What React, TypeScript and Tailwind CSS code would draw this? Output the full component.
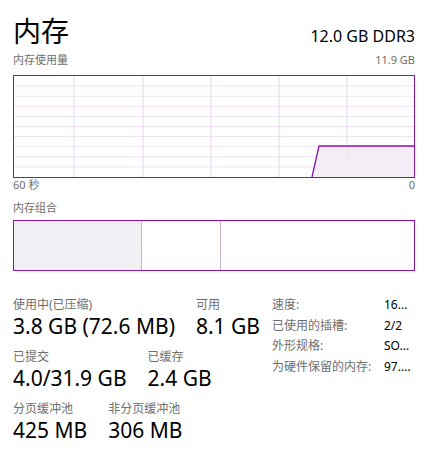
import React from 'react'

const font = { fontFamily: '"Segoe UI", "Noto Sans", "Noto Sans CJK SC", sans-serif' }

const purple = '#8b12ae'

function UsageGraph() {
  const w = 400
  const h = 101
  const vLines = [60, 129, 197, 265, 333]
  const hLines = Array.from({ length: 9 }, (_, i) => ((i + 1) * h) / 10)
  return (
    <div className="border border-[#8b12ae] h-[103px] w-full">
      <svg width="100%" height="100%" viewBox={`0 0 ${w} ${h}`} preserveAspectRatio="none">
        {hLines.map((y) => (
          <line key={y} x1={0} x2={w} y1={y} y2={y} stroke="#efe2f2" strokeWidth={1} />
        ))}
        {vLines.map((x) => (
          <line key={x} x1={x} x2={x} y1={0} y2={h} stroke="#e4d4e9" strokeWidth={1} />
        ))}
        <polygon points={`298,${h} 305,70 ${w},70 ${w},${h}`} fill="#f1eaf5" fillOpacity={0.85} />
        <polyline points={`298,${h} 305,70 ${w},70`} fill="none" stroke={purple} strokeWidth={1.3} />
      </svg>
    </div>
  )
}

function Composition() {
  return (
    <div className="flex h-[51px] w-full border border-[#8b12ae]">
      <div className="w-[128px] bg-[#f3f0f5] border-r border-[#c7b2cf]" />
      <div className="w-[79px] border-r border-[#c7b2cf]" />
      <div className="flex-1" />
    </div>
  )
}

function Stat({ label, value }: { label: string; value: string }) {
  return (
    <div className="flex flex-col">
      <span className="text-[12px] leading-[16px] text-[#6e6e6e]">{label}</span>
      <span className="text-[21px] leading-[26px] text-black">{value}</span>
    </div>
  )
}

const specs: [string, string][] = [
  ['速度:', '16...'],
  ['已使用的插槽:', '2/2'],
  ['外形规格:', 'SO...'],
  ['为硬件保留的内存:', '97....'],
]

export default function App() {
  return (
    <div className="w-[427px] h-[462px] bg-white pl-[13px] pr-[12px] overflow-hidden" style={font}>
      {/* Header */}
      <div className="flex items-baseline justify-between pt-[12px]">
        <h1 className="text-[28px] leading-[38px] font-normal text-black">内存</h1>
        <span className="text-[16px] text-black">12.0 GB DDR3</span>
      </div>

      <div className="flex items-baseline justify-between text-[11px] leading-[16px] text-[#6e6e6e] mt-[2px]">
        <span>内存使用量</span>
        <span>11.9 GB</span>
      </div>

      <div className="mt-[7px]">
        <UsageGraph />
      </div>

      <div className="flex justify-between text-[11px] leading-[14px] text-[#6e6e6e]">
        <span>60 秒</span>
        <span>0</span>
      </div>

      <div className="text-[11px] leading-[16px] text-[#6e6e6e] mt-[8px]">内存组合</div>

      <div className="mt-[4px]">
        <Composition />
      </div>

      {/* Stats */}
      <div className="flex mt-[26px]">
        <div className="flex flex-col gap-[10px] w-[259px]">
          <div className="flex gap-[21px]">
            <Stat label="使用中(已压缩)" value="3.8 GB (72.6 MB)" />
            <Stat label="可用" value="8.1 GB" />
          </div>
          <div className="flex gap-[21px]">
            <Stat label="已提交" value="4.0/31.9 GB" />
            <Stat label="已缓存" value="2.4 GB" />
          </div>
          <div className="flex gap-[21px]">
            <Stat label="分页缓冲池" value="425 MB" />
            <Stat label="非分页缓冲池" value="306 MB" />
          </div>
        </div>
        <div className="flex flex-col text-[12px] leading-[20.5px] -mt-[2px]">
          {specs.map(([k, v]) => (
            <div key={k} className="flex">
              <span className="w-[112px] text-[#6e6e6e]">{k}</span>
              <span className="text-black">{v}</span>
            </div>
          ))}
        </div>
      </div>
    </div>
  )
}
